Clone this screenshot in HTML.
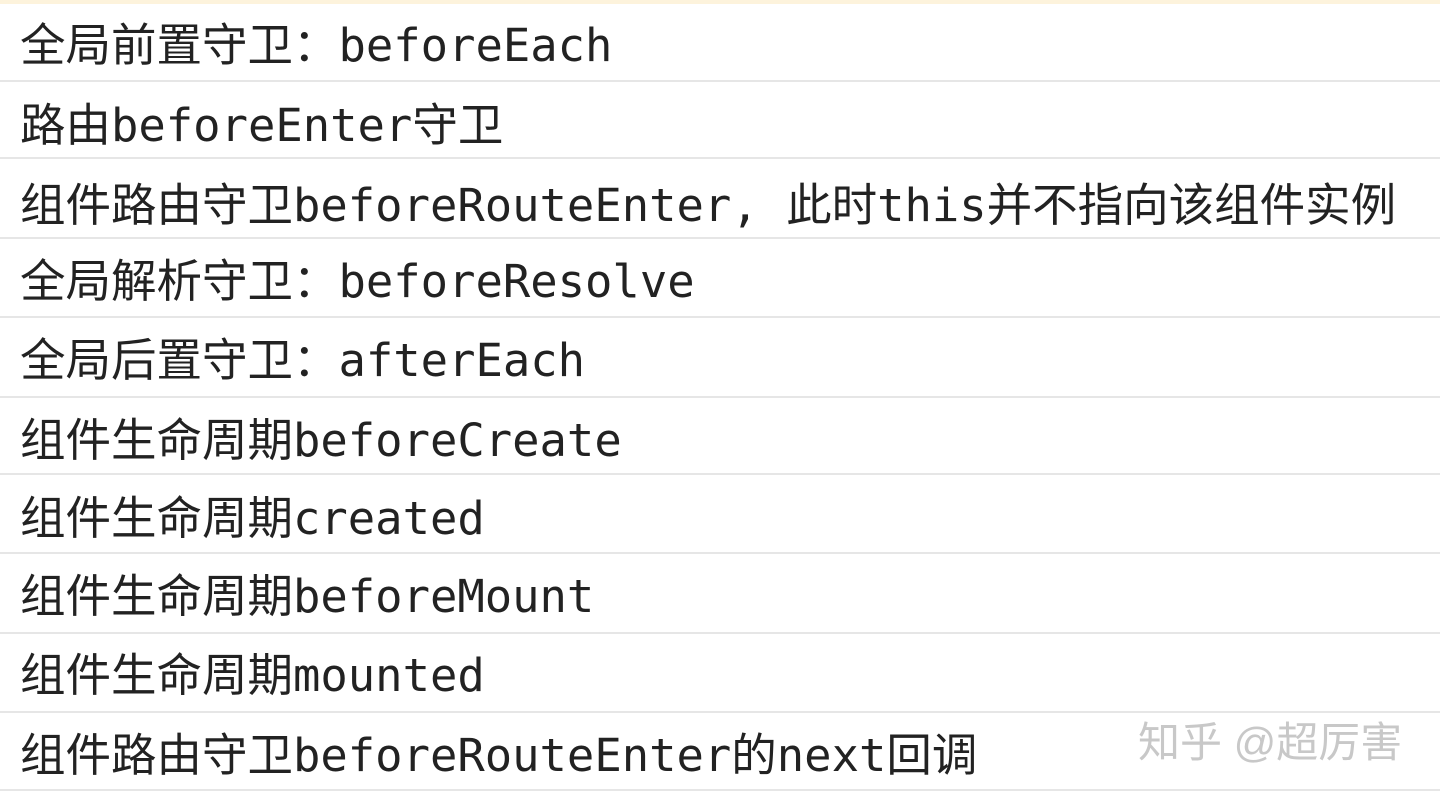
<!DOCTYPE html>
<html><head><meta charset="utf-8"><style>
html,body{margin:0;padding:0;background:#fff;width:1440px;height:802px;overflow:hidden;position:relative}
.top{position:absolute;left:0;top:0;width:1440px;height:4px;background:#fdf3dc}
.sep{position:absolute;left:0;width:1440px;height:2px;background:#e6e6e6}
.t{position:absolute;left:20px;font-family:"DejaVu Sans Mono","Noto Sans CJK SC",monospace;font-size:45.5px;color:#222;line-height:50px;white-space:nowrap}
.wm{position:absolute;left:1138px;top:718px;font-family:"Liberation Sans","Noto Sans CJK SC",sans-serif;font-size:42px;color:#c8c8c8;line-height:50px;white-space:nowrap}
</style></head><body>
<div class="top"></div>
<div class="sep" style="top:80px"></div>
<div class="sep" style="top:157px"></div>
<div class="sep" style="top:237px"></div>
<div class="sep" style="top:316px"></div>
<div class="sep" style="top:396px"></div>
<div class="sep" style="top:473px"></div>
<div class="sep" style="top:552px"></div>
<div class="sep" style="top:632px"></div>
<div class="sep" style="top:711px"></div>
<div class="sep" style="top:789px"></div>
<div class="t" style="top:21px">全局前置守卫：beforeEach</div>
<div class="t" style="top:101px">路由beforeEnter守卫</div>
<div class="t" style="top:181px">组件路由守卫beforeRouteEnter, 此时this并不指向该组件实例</div>
<div class="t" style="top:257px">全局解析守卫：beforeResolve</div>
<div class="t" style="top:336px">全局后置守卫：afterEach</div>
<div class="t" style="top:416px">组件生命周期beforeCreate</div>
<div class="t" style="top:494px">组件生命周期created</div>
<div class="t" style="top:572px">组件生命周期beforeMount</div>
<div class="t" style="top:651px">组件生命周期mounted</div>
<div class="t" style="top:731px">组件路由守卫beforeRouteEnter的next回调</div>
<div class="wm">知乎 @超厉害</div>
</body></html>
